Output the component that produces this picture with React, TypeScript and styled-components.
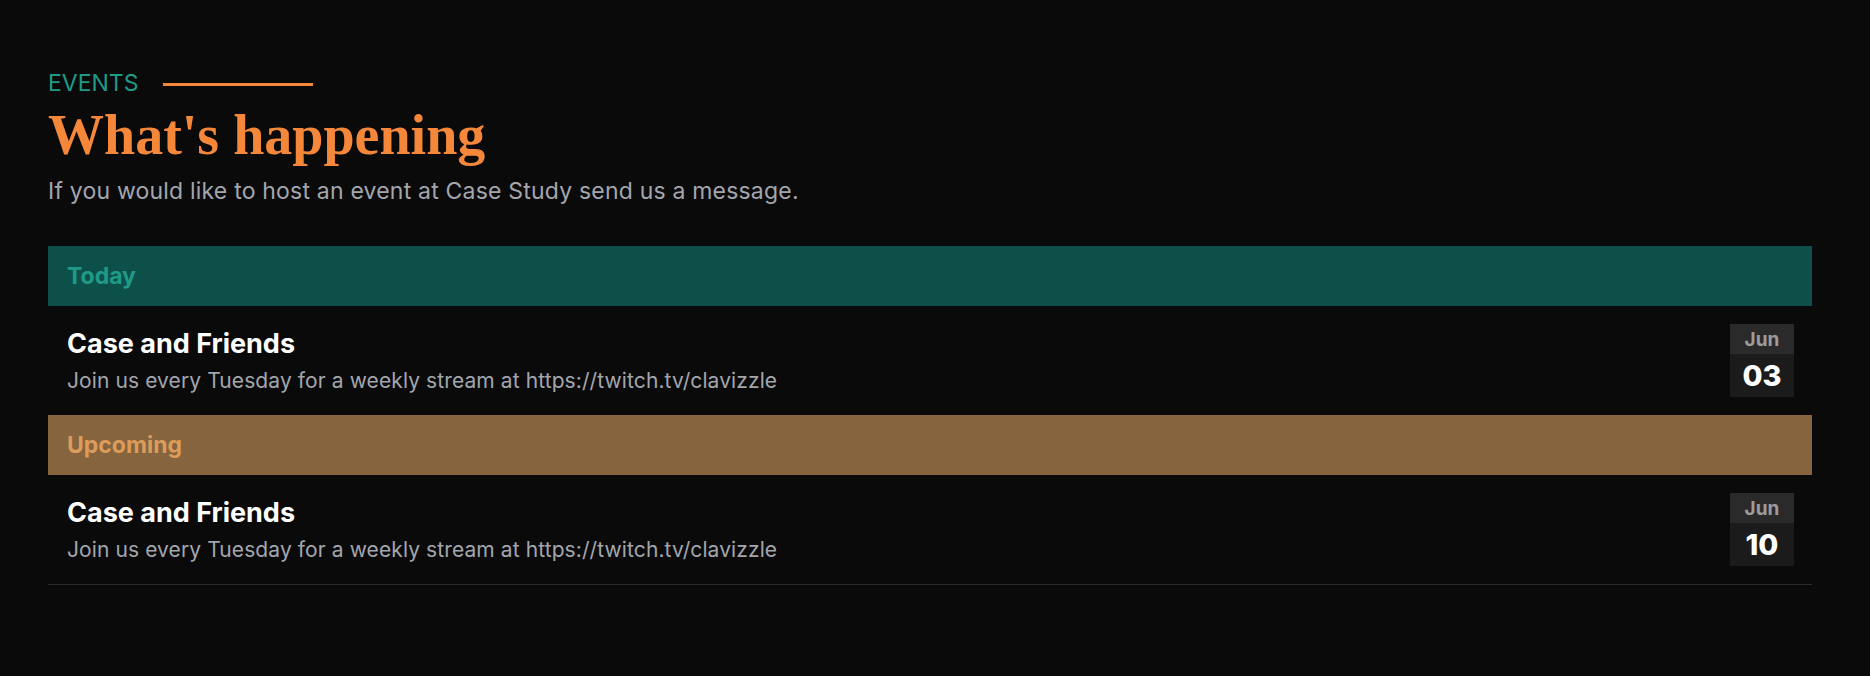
import { FC } from "react";
import styled, { createGlobalStyle } from "styled-components";

const GlobalStyle = createGlobalStyle`
    body {
        margin: 0;
        background: #0a0a0a;
        font-family: Inter, "Liberation Sans", sans-serif;
    }
`;

interface EventItem {
    title: string;
    description: string;
    month: string;
    day: string;
}

interface EventGroup {
    label: string;
    tone: "today" | "upcoming";
    events: EventItem[];
}

const groups: EventGroup[] = [
    {
        label: "Today",
        tone: "today",
        events: [
            {
                title: "Case and Friends",
                description:
                    "Join us every Tuesday for a weekly stream at https://twitch.tv/clavizzle",
                month: "Jun",
                day: "03",
            },
        ],
    },
    {
        label: "Upcoming",
        tone: "upcoming",
        events: [
            {
                title: "Case and Friends",
                description:
                    "Join us every Tuesday for a weekly stream at https://twitch.tv/clavizzle",
                month: "Jun",
                day: "10",
            },
        ],
    },
];

const EventRow: FC<{ event: EventItem; last: boolean }> = ({ event, last }) => (
    <Row $last={last}>
        <RowText>
            <Title>{event.title}</Title>
            <Description>{event.description}</Description>
        </RowText>
        <DateBox>
            <Month>{event.month}</Month>
            <Day>{event.day}</Day>
        </DateBox>
    </Row>
);

export default function App() {
    return (
        <Page>
            <GlobalStyle />
            <Eyebrow>
                <EyebrowText>EVENTS</EyebrowText>
                <EyebrowLine />
            </Eyebrow>
            <Heading>What's happening</Heading>
            <Intro>
                If you would like to host an event at Case Study send us a message.
            </Intro>
            <List>
                {groups.map((group, gi) => (
                    <div key={group.label}>
                        <GroupHeader $tone={group.tone}>{group.label}</GroupHeader>
                        {group.events.map((event, ei) => (
                            <EventRow
                                key={ei}
                                event={event}
                                last={gi === groups.length - 1}
                            />
                        ))}
                    </div>
                ))}
            </List>
        </Page>
    );
}

const Page = styled.div`
    padding: 68px 58px 80px 48px;
    min-height: 676px;
    box-sizing: border-box;
`;

const Eyebrow = styled.div`
    display: flex;
    align-items: center;
    gap: 25px;
`;

const EyebrowText = styled.span`
    color: #1f9a88;
    font-size: 23px;
    font-weight: 400;
    line-height: 30px;
`;

const EyebrowLine = styled.span`
    display: block;
    width: 150px;
    height: 3px;
    margin-top: 2px;
    background: #f4873a;
`;

const Heading = styled.h1`
    margin: 5px 0 0;
    color: #f4873a;
    font-family: "Liberation Serif", "DejaVu Serif", serif;
    font-size: 56px;
    font-weight: 700;
    line-height: 64px;
`;

const Intro = styled.p`
    margin: 9px 0 0;
    color: #a3a6ad;
    font-size: 23px;
    line-height: 30px;
    letter-spacing: 0.2px;
`;

const List = styled.div`
    margin-top: 40px;
`;

const GroupHeader = styled.div<{ $tone: "today" | "upcoming" }>`
    height: 60px;
    display: flex;
    align-items: center;
    padding: 0 19px;
    background: ${(p) => (p.$tone === "today" ? "#0d5049" : "#85643e")};
    color: ${(p) => (p.$tone === "today" ? "#1f9a88" : "#dc9c5a")};
    font-size: 23px;
    font-weight: 700;
`;

const Row = styled.div<{ $last: boolean }>`
    display: flex;
    align-items: center;
    justify-content: space-between;
    padding: 18px 18px 18px 19px;
    border-bottom: ${(p) => (p.$last ? "1px solid #2a2a2a" : "none")};
`;

const RowText = styled.div`
    display: flex;
    flex-direction: column;
    gap: 6px;
`;

const Title = styled.div`
    color: #ffffff;
    font-size: 27px;
    font-weight: 700;
    line-height: 34px;
`;

const Description = styled.div`
    color: #a3a6ad;
    font-size: 21px;
    line-height: 28px;
    letter-spacing: 0.1px;
`;

const DateBox = styled.div`
    width: 64px;
    display: flex;
    flex-direction: column;
    text-align: center;
`;

const Month = styled.div`
    height: 30px;
    line-height: 31px;
    background: #2a2a2a;
    color: #9c9c9c;
    font-size: 19px;
    font-weight: 700;
`;

const Day = styled.div`
    height: 43px;
    line-height: 44px;
    background: #1b1b1b;
    color: #ffffff;
    font-size: 29px;
    font-weight: 800;
`;
